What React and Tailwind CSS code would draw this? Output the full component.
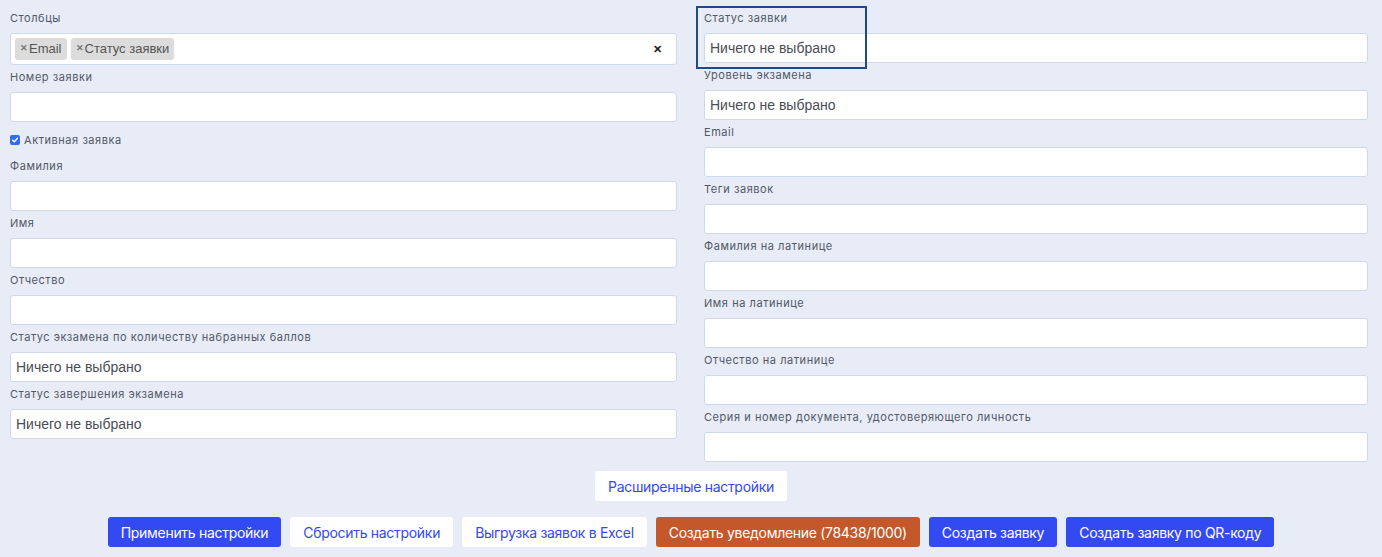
import React from 'react';

const leftFields = [
  { label: 'Фамилия' },
  { label: 'Имя' },
  { label: 'Отчество' },
  { label: 'Статус экзамена по количеству набранных баллов', select: true },
  { label: 'Статус завершения экзамена', select: true },
];

const rightFields = [
  { label: 'Статус заявки', select: true },
  { label: 'Уровень экзамена', select: true },
  { label: 'Email' },
  { label: 'Теги заявок' },
  { label: 'Фамилия на латинице' },
  { label: 'Имя на латинице' },
  { label: 'Отчество на латинице' },
  { label: 'Серия и номер документа, удостоверяющего личность' },
];

const Label = ({ children }) => (
  <div className="h-4 mb-[7px] text-[11px] leading-4 tracking-[0.55px] text-[#525866] font-['Inter',sans-serif]">
    {children}
  </div>
);

const Field = ({ label, select }) => (
  <div className="mb-[4px]">
    <Label>{label}</Label>
    <div className="h-[30px] bg-white border border-[#cfd9ec] rounded-[3px] flex items-center pl-[5px] text-[14px] text-[#4a4d55] font-['Liberation_Sans',sans-serif]">
      {select ? 'Ничего не выбрано' : ''}
    </div>
  </div>
);

const Tag = ({ children }) => (
  <span className="h-[22px] px-[5px] flex items-center bg-[#dcdcdc] rounded-[3px] text-[13px] text-[#555] font-['Liberation_Sans',sans-serif]">
    <span className="text-[9px] font-bold mr-[1px] text-[#777]">✕</span>
    {children}
  </span>
);

const Button = ({ children, variant = 'white' }) => {
  const styles = {
    blue: 'bg-[#3349f2] text-white',
    white: 'bg-white text-[#3549ee]',
    orange: 'bg-[#c4582a] text-white',
  };
  return (
    <button className={`h-[30px] px-[13px] rounded-[3px] text-[14px] tracking-[-0.3px] font-['Inter',sans-serif] ${styles[variant]}`}>
      {children}
    </button>
  );
};

export default function App() {
  return (
    <div className="relative min-h-screen bg-[#e8ecf7] pt-[10px]">
      <div className="grid grid-cols-[667px_664px] gap-x-[27px] pl-[10px]">
        <div>
          <div className="mb-[4px]">
            <Label>Столбцы</Label>
            <div className="h-[32px] bg-white border border-[#cfd9ec] rounded-[3px] flex items-center pl-[4px] pr-[14px] gap-[4px]">
              <Tag>Email</Tag>
              <Tag>Статус заявки</Tag>
              <span className="ml-auto text-[11px] font-bold text-[#222]">✕</span>
            </div>
          </div>
          <Field label="Номер заявки" />
          <div className="h-[28px] mb-[4px] flex items-center gap-[4px]">
            <span className="w-[10px] h-[10px] rounded-[2px] bg-[#2f6ee8] flex items-center justify-center">
              <svg width="8" height="8" viewBox="0 0 10 10" fill="none">
                <path d="M2 5.2 L4.2 7.3 L8 2.8" stroke="white" strokeWidth="1.8" strokeLinecap="round" strokeLinejoin="round" />
              </svg>
            </span>
            <span className="text-[11px] leading-4 tracking-[0.55px] text-[#525866] font-['Inter',sans-serif]">
              Активная заявка
            </span>
          </div>
          {leftFields.map((f) => (
            <Field key={f.label} {...f} />
          ))}
        </div>
        <div>
          {rightFields.map((f) => (
            <Field key={f.label} {...f} />
          ))}
        </div>
      </div>

      <div className="flex justify-center mt-[5px]">
        <Button>Расширенные настройки</Button>
      </div>

      <div className="flex justify-center gap-[9px] mt-[16px] pb-[10px]">
        <Button variant="blue">Применить настройки</Button>
        <Button>Сбросить настройки</Button>
        <Button>Выгрузка заявок в Excel</Button>
        <Button variant="orange">Создать уведомление (78438/1000)</Button>
        <Button variant="blue">Создать заявку</Button>
        <Button variant="blue">Создать заявку по QR-коду</Button>
      </div>

      <div className="absolute left-[696px] top-[6px] w-[171px] h-[63px] border-2 border-[#1d4a8c] pointer-events-none" />
    </div>
  );
}
